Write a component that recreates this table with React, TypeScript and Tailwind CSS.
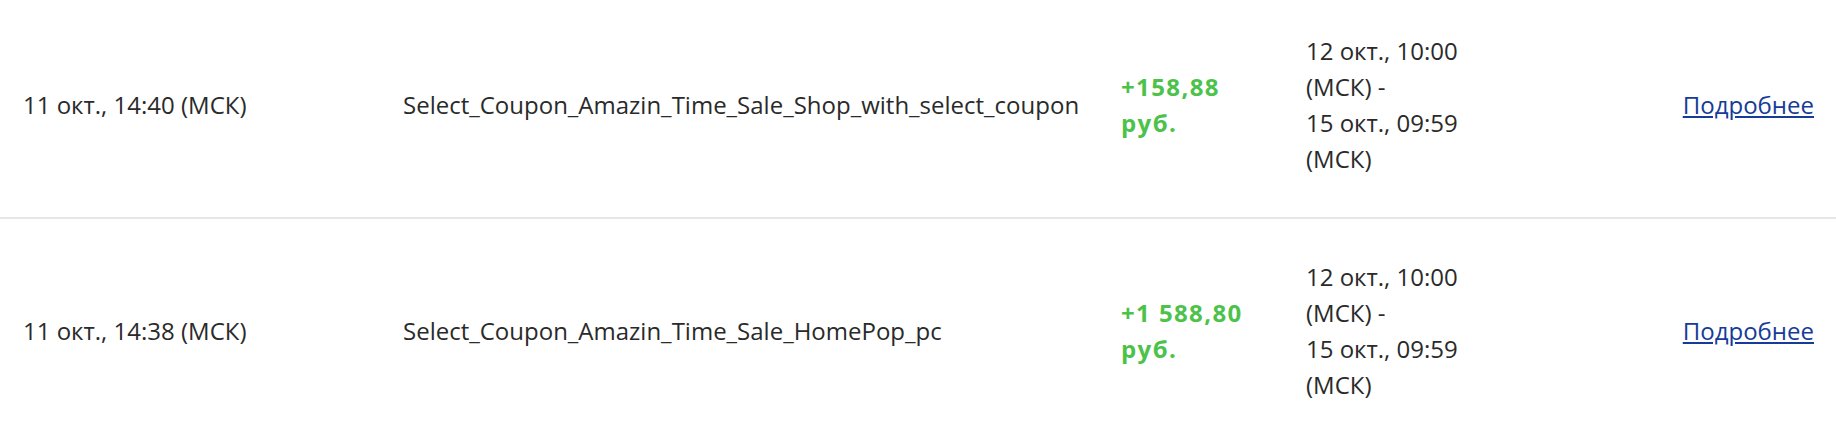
const rows = [
  {
    date: "11 окт., 14:40 (МСК)",
    name: "Select_Coupon_Amazin_Time_Sale_Shop_with_select_coupon",
    amount: "+158,88",
  },
  {
    date: "11 окт., 14:38 (МСК)",
    name: "Select_Coupon_Amazin_Time_Sale_HomePop_pc",
    amount: "+1\u00a0588,80",
  },
];

export default function App() {
  return (
    <div className="w-[1836px] h-[442px] overflow-hidden bg-white font-['Open_Sans',sans-serif] text-[24px] leading-[36px] text-[#2a2a2a]">
      <div className="-mt-[7px]">
        {rows.map((row, i) => (
          <div
            key={i}
            className={
              "grid grid-cols-[380px_718px_185px_1fr_auto] items-center py-10 " +
              (i === 0 ? "border-b-2 border-[#e6e6e6]" : "")
            }
          >
            <div className="pl-[23px]">{row.date}</div>
            <div className="pl-[23px]">{row.name}</div>
            <div className="pl-[23px] pr-[10px] font-bold tracking-[1.4px] text-[#4cc24a]">
              {row.amount} руб.
            </div>
            <div className="pl-[23px] max-w-[220px]">
              <div>12 окт., 10:00 (МСК) -</div>
              <div>15 окт., 09:59 (МСК)</div>
            </div>
            <div className="pr-[22px]">
              <a href="#" className="underline text-[#163b98]">
                Подробнее
              </a>
            </div>
          </div>
        ))}
      </div>
    </div>
  );
}
